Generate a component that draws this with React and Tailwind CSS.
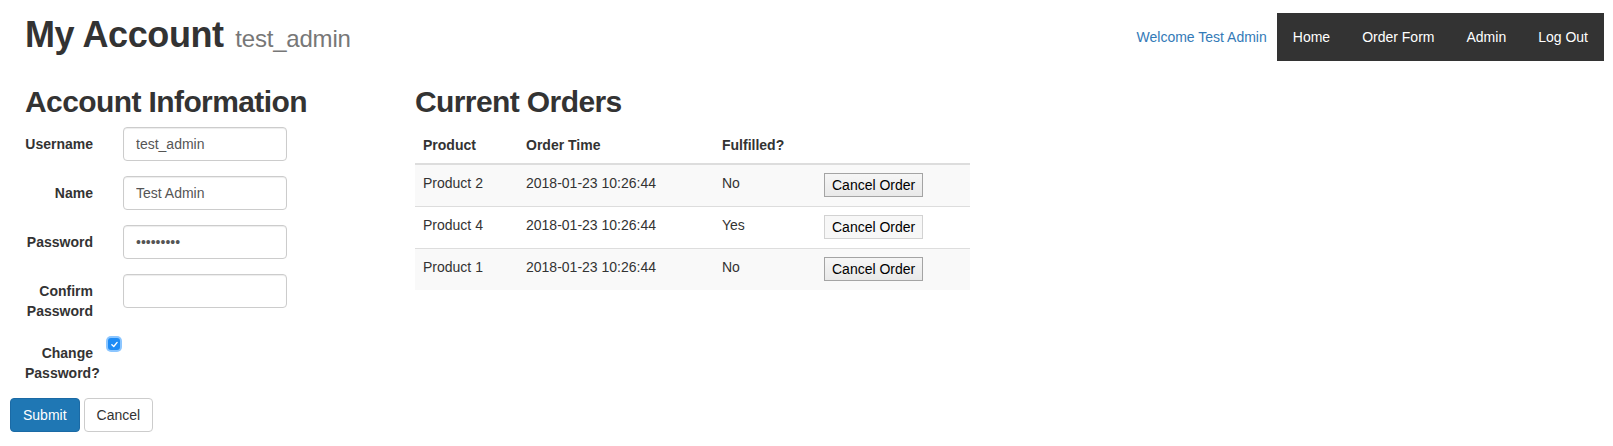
import { useState } from 'react';

const navLinks = ['Home', 'Order Form', 'Admin', 'Log Out'];

const orders = [
  { product: 'Product 2', time: '2018-01-23 10:26:44', fulfilled: 'No', soft: false },
  { product: 'Product 4', time: '2018-01-23 10:26:44', fulfilled: 'Yes', soft: true },
  { product: 'Product 1', time: '2018-01-23 10:26:44', fulfilled: 'No', soft: false },
];

function FieldRow({ label, children }) {
  return (
    <div className="mb-[15px] flex items-start">
      <label className="w-[68px] shrink-0 pt-[7px] text-right text-sm leading-5 font-bold text-[#333]">
        {label}
      </label>
      {children}
    </div>
  );
}

function TextInput({ type = 'text', value, onChange }) {
  return (
    <input
      type={type}
      value={value}
      onChange={(e) => onChange(e.target.value)}
      className="ml-[30px] h-[34px] w-[164px] rounded-[4px] border border-[#ccc] bg-white px-3 text-sm text-[#555] shadow-[inset_0_1px_1px_rgba(0,0,0,0.075)] outline-none"
    />
  );
}

export default function App() {
  const [username, setUsername] = useState('test_admin');
  const [name, setName] = useState('Test Admin');
  const [password, setPassword] = useState('123456789');
  const [confirm, setConfirm] = useState('');
  const [changePw, setChangePw] = useState(true);

  return (
    <div className="min-h-screen bg-white font-['Liberation_Sans',Arial,sans-serif] text-[#333]">
      <header className="flex items-start justify-between pt-[13px] pr-[9px] pl-[25px]">
        <h1 className="mt-[2px] text-[36px] leading-[39.6px] font-bold tracking-[-0.4px]">
          My Account{' '}
          <small className="ml-[2px] text-[24px] leading-none font-normal tracking-[-0.2px] text-[#777]">test_admin</small>
        </h1>
        <div className="flex items-center">
          <a href="#" className="mr-[10px] text-sm text-[#337ab7]">
            Welcome Test Admin
          </a>
          <nav className="flex h-12 bg-[#333]">
            {navLinks.map((link) => (
              <a key={link} href="#" className="px-4 text-sm leading-[48px] text-white">
                {link}
              </a>
            ))}
          </nav>
        </div>
      </header>

      <main className="mt-[24px] flex px-[10px]">
        <section className="w-[390px] shrink-0 pl-[15px]">
          <h2 className="mb-[9px] text-[30px] leading-[33px] font-bold tracking-[-0.6px]">Account Information</h2>
          <form onSubmit={(e) => e.preventDefault()}>
            <FieldRow label="Username">
              <TextInput value={username} onChange={setUsername} />
            </FieldRow>
            <FieldRow label="Name">
              <TextInput value={name} onChange={setName} />
            </FieldRow>
            <FieldRow label="Password">
              <TextInput type="password" value={password} onChange={setPassword} />
            </FieldRow>
            <FieldRow label="Confirm Password">
              <TextInput type="password" value={confirm} onChange={setConfirm} />
            </FieldRow>
            <FieldRow label="Change Password?">
              <button
                type="button"
                onClick={() => setChangePw((v) => !v)}
                className={`mt-[2px] ml-[15px] flex h-[12px] w-[12px] items-center justify-center rounded-[3px] ${
                  changePw ? 'bg-[#1f8cf5] ring-[2px] ring-[#8cc6ff]' : 'border border-[#999] bg-white'
                }`}
              >
                {changePw && (
                  <svg viewBox="0 0 12 12" className="h-[9px] w-[9px]">
                    <path d="M2.5 6.3 L5 8.6 L9.5 3.2" fill="none" stroke="white" strokeWidth="1.8" strokeLinecap="round" strokeLinejoin="round" />
                  </svg>
                )}
              </button>
            </FieldRow>
            <div className="-ml-[15px] flex gap-1">
              <button type="submit" className="h-[34px] rounded-[4px] border border-[#1b6aa5] bg-[#1f77b4] px-3 text-sm text-white">
                Submit
              </button>
              <button type="button" className="h-[34px] rounded-[4px] border border-[#ccc] bg-white px-3 text-sm text-[#333]">
                Cancel
              </button>
            </div>
          </form>
        </section>

        <section className="pl-[15px]">
          <h2 className="mb-[9px] text-[30px] leading-[33px] font-bold tracking-[-0.6px]">Current Orders</h2>
          <table className="w-[555px] table-fixed border-collapse text-sm leading-5">
            <colgroup>
              <col className="w-[103px]" />
              <col className="w-[196px]" />
              <col className="w-[102px]" />
              <col className="w-[154px]" />
            </colgroup>
            <thead>
              <tr>
                <th className="border-b-2 border-[#ddd] p-2 text-left font-bold">Product</th>
                <th className="border-b-2 border-[#ddd] p-2 text-left font-bold">Order Time</th>
                <th className="border-b-2 border-[#ddd] p-2 text-left font-bold">Fulfilled?</th>
                <th className="border-b-2 border-[#ddd] p-2"></th>
              </tr>
            </thead>
            <tbody>
              {orders.map((o, i) => (
                <tr key={o.product} className={i % 2 === 0 ? 'bg-[#f9f9f9]' : 'bg-white'}>
                  <td className="border-t border-[#ddd] px-2 pt-2 pb-[9px] align-top">{o.product}</td>
                  <td className="border-t border-[#ddd] px-2 pt-2 pb-[9px] align-top">{o.time}</td>
                  <td className="border-t border-[#ddd] px-2 pt-2 pb-[9px] align-top">{o.fulfilled}</td>
                  <td className="border-t border-[#ddd] px-2 pt-2 pb-[9px] align-top">
                    <button
                      type="button"
                      className={`block h-[24px] border px-[7px] text-sm leading-none text-black ${
                        o.soft
                          ? 'border-[#d2d2d2] bg-[#f7f7f7]'
                          : 'border-[#a4a4a4] bg-gradient-to-b from-[#f6f6f6] to-[#e9e9e9]'
                      }`}
                    >
                      Cancel Order
                    </button>
                  </td>
                </tr>
              ))}
            </tbody>
          </table>
        </section>
      </main>
    </div>
  );
}
